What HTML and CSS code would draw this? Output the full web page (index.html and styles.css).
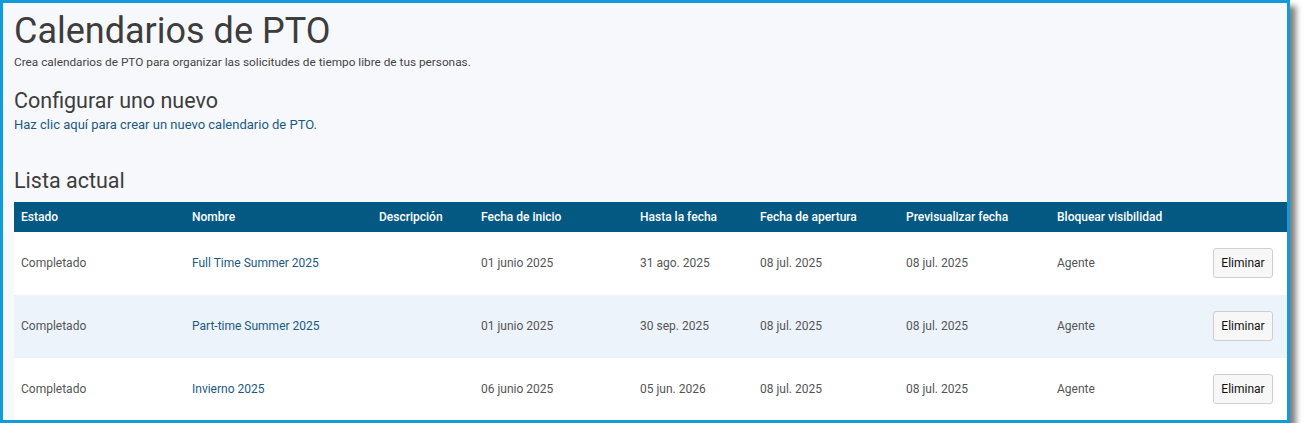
FILE: index.html
```html
<!DOCTYPE html>
<html lang="es">
<head>
<meta charset="utf-8">
<title>Calendarios de PTO</title>
<link rel="stylesheet" href="styles.css">
</head>
<body>
<div class="frame">
  <div class="page">
    <h1 class="title">Calendarios de PTO</h1>
    <p class="subtitle">Crea calendarios de PTO para organizar las solicitudes de tiempo libre de tus personas.</p>
    <h2 class="section">Configurar uno nuevo</h2>
    <a class="create-link" href="#">Haz clic aquí para crear un nuevo calendario de PTO.</a>
    <h2 class="section list-title">Lista actual</h2>
    <table class="list">
      <colgroup>
        <col class="c-estado"><col class="c-nombre"><col class="c-desc"><col class="c-inicio"><col class="c-hasta"><col class="c-apertura"><col class="c-prev"><col class="c-bloq"><col class="c-act">
      </colgroup>
      <thead>
        <tr>
          <th>Estado</th><th>Nombre</th><th>Descripción</th><th>Fecha de inicio</th><th>Hasta la fecha</th><th>Fecha de apertura</th><th>Previsualizar fecha</th><th>Bloquear visibilidad</th><th></th>
        </tr>
      </thead>
      <tbody>
        <tr>
          <td>Completado</td><td><a href="#">Full Time Summer 2025</a></td><td></td><td>01 junio 2025</td><td>31 ago. 2025</td><td>08 jul. 2025</td><td>08 jul. 2025</td><td>Agente</td><td class="act"><button class="btn">Eliminar</button></td>
        </tr>
        <tr class="alt">
          <td>Completado</td><td><a href="#">Part-time Summer 2025</a></td><td></td><td>01 junio 2025</td><td>30 sep. 2025</td><td>08 jul. 2025</td><td>08 jul. 2025</td><td>Agente</td><td class="act"><button class="btn">Eliminar</button></td>
        </tr>
        <tr>
          <td>Completado</td><td><a href="#">Invierno 2025</a></td><td></td><td>06 junio 2025</td><td>05 jun. 2026</td><td>08 jul. 2025</td><td>08 jul. 2025</td><td>Agente</td><td class="act"><button class="btn">Eliminar</button></td>
        </tr>
      </tbody>
    </table>
  </div>
</div>
</body>
</html>
```
FILE: styles.css
```css
html, body {
  margin: 0;
  padding: 0;
  background: #ffffff;
}
body {
  font-family: Roboto, "Liberation Sans", Arial, sans-serif;
  color: #444444;
}
.frame {
  width: 1284px;
  height: 417px;
  border: 3px solid #129bd9;
  box-shadow: 6px 6px 6px rgba(0, 0, 0, 0.5);
  overflow: hidden;
}
.page {
  background: #f7f8fc;
  height: 100%;
  padding: 0 0 0 11px;
}
.title {
  margin: 0;
  padding-top: 8px;
  font-size: 36px;
  font-weight: 400;
  line-height: 40px;
  color: #3d3d3d;
}
.subtitle {
  margin: 4px 0 0;
  font-size: 11.8px;
  line-height: 14px;
  color: #444444;
}
.section {
  margin: 20px 0 0;
  font-size: 21.5px;
  font-weight: 400;
  line-height: 24px;
  color: #3d3d3d;
}
.create-link {
  display: block;
  margin-top: 4px;
  font-size: 13px;
  line-height: 16px;
  color: #1b5a7f;
  text-decoration: none;
}
.list-title {
  margin-top: 36px;
}
.list {
  margin-top: 9px;
  width: 1273px;
  border-collapse: collapse;
  table-layout: fixed;
  font-size: 12px;
}
.c-estado { width: 171px; }
.c-nombre { width: 187px; }
.c-desc { width: 102px; }
.c-inicio { width: 159px; }
.c-hasta { width: 120px; }
.c-apertura { width: 146px; }
.c-prev { width: 151px; }
.c-bloq { width: 156px; }
.c-act { width: 81px; }
.list th {
  background: #045982;
  color: #ffffff;
  font-weight: 500;
  text-align: left;
  height: 29px;
  padding: 0 7px 1px;
  vertical-align: middle;
}
.list td {
  height: 62px;
  padding: 0 7px 1px;
  background: #ffffff;
  color: #555555;
  vertical-align: middle;
}
.list tr.alt td {
  background: #ecf3fb;
}
.list td a {
  color: #1b5a7f;
  text-decoration: none;
}
.list td.act {
  text-align: right;
  padding-right: 14px;
}
.btn {
  font-family: Roboto, "Liberation Sans", Arial, sans-serif;
  font-size: 12px;
  color: #111111;
  background: #f7f7f7;
  border: 1px solid #cfcfcf;
  border-radius: 3px;
  width: 60px;
  height: 30px;
  padding: 0;
}
```
